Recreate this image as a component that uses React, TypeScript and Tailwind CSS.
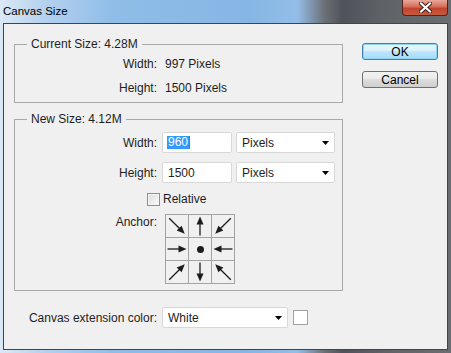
import React from "react";

const FRAME =
  "bg-[linear-gradient(90deg,#dbe9f7_0%,#b4d1ee_10%,#8fbde8_25%,#86b6e4_55%,#93bde7_66%,#6b7076_72%,#4f5359_76%,#5f6368_85%,#6a6e73_100%)]";

function Arrow({ rot, diag }: { rot: number; diag?: boolean }) {
  const start = diag ? 0 : 1.5;
  const tip = diag ? 22 : 20.5;
  return (
    <svg width="22" height="22" viewBox="0 0 22 22">
      <g transform={`rotate(${rot} 11 11)`}>
        <line x1={start} y1="11" x2={tip - 6} y2="11" stroke="#1c1c1c" strokeWidth="1.3" />
        <polygon points={`${tip - 8},7.5 ${tip},11 ${tip - 8},14.5`} fill="#1c1c1c" />
      </g>
    </svg>
  );
}

function Dropdown({ value, width }: { value: string; width: string }) {
  return (
    <div
      className={`${width} h-[21px] flex items-center justify-between bg-white border border-[#d8d8d8] rounded-[2px] pl-[5px] pr-[5px]`}
    >
      <span>{value}</span>
      <svg width="7" height="4" viewBox="0 0 7 4">
        <polygon points="0,0 7,0 3.5,4" fill="#000" />
      </svg>
    </div>
  );
}

export default function App() {
  const anchors: { rot: number; diag?: boolean; dot?: boolean }[] = [
    { rot: 45, diag: true },
    { rot: -90 },
    { rot: 135, diag: true },
    { rot: 0 },
    { rot: 0, dot: true },
    { rot: 180 },
    { rot: -45, diag: true },
    { rot: 90 },
    { rot: -135, diag: true },
  ];

  return (
    <div
      className={`w-[451px] h-[353px] overflow-hidden ${FRAME} font-['Liberation_Sans',Arial,sans-serif] text-[12px] leading-[14px] text-[#1e1e1e]`}
    >
      {/* title bar */}
      <div className="h-[23px] flex items-start justify-between">
        <span className="pl-[3px] pt-[4px] text-[11.5px] text-black">Canvas Size</span>
        <div className="mr-[3px] w-[46px] h-[16px] rounded-b-[4px] border border-t-0 border-[#5a1f16] bg-[linear-gradient(180deg,#e9a899_0%,#d46e5b_45%,#c1432c_55%,#c85b3c_100%)] flex items-center justify-center">
          <svg width="13" height="11" viewBox="0 0 13 11">
            <path d="M2 1.5 L11 9.5 M11 1.5 L2 9.5" stroke="#3a1a14" strokeWidth="4" strokeLinecap="square" />
            <path d="M2 1.5 L11 9.5 M11 1.5 L2 9.5" stroke="#fff" strokeWidth="2.2" strokeLinecap="square" />
          </svg>
        </div>
      </div>

      {/* client */}
      <div className="ml-[3px] w-[445px] h-[327px] border border-[#3b4650] bg-[#f0f0f0]">
        <div className="flex">
          <div className="pl-[10px] w-[339px]">
            <fieldset className="mt-[13px] border border-[#a9a9a9] pt-[6px] pb-[7px]">
              <legend className="ml-[12px] px-[4px]">Current Size: 4.28M</legend>
              <div className="flex flex-col gap-[10px]">
                <div className="flex">
                  <span className="w-[142px] text-right">Width:</span>
                  <span className="ml-[8px]">997 Pixels</span>
                </div>
                <div className="flex">
                  <span className="w-[142px] text-right">Height:</span>
                  <span className="ml-[8px]">1500 Pixels</span>
                </div>
              </div>
            </fieldset>

            <fieldset className="mt-[9px] border border-[#a9a9a9] pt-[6px] pb-[6px]">
              <legend className="ml-[12px] px-[4px]">New Size: 4.12M</legend>
              <div className="flex flex-col">
                <div className="flex items-center">
                  <span className="w-[142px] text-right">Width:</span>
                  <div className="ml-[5px] w-[70px] h-[21px] flex items-center bg-white border border-[#d8d8d8] rounded-[2px] pl-[4px]">
                    <span className="bg-[#3399ff] text-white leading-[13px] px-px">960</span>
                    <span className="w-px h-[13px] bg-[#c06010]" />
                  </div>
                  <div className="ml-[4px]">
                    <Dropdown value="Pixels" width="w-[99px]" />
                  </div>
                </div>
                <div className="flex items-center mt-[9px]">
                  <span className="w-[142px] text-right">Height:</span>
                  <div className="ml-[5px] w-[70px] h-[21px] flex items-center bg-white border border-[#d8d8d8] rounded-[2px] pl-[5px]">
                    1500
                  </div>
                  <div className="ml-[4px]">
                    <Dropdown value="Pixels" width="w-[99px]" />
                  </div>
                </div>
                <div className="flex items-center mt-[9px] pl-[132px]">
                  <span className="w-[13px] h-[13px] border border-[#8e8f8f] bg-[linear-gradient(135deg,#dcdcdc,#fbfbfb)] shadow-[inset_0_0_0_1px_#f4f4f4]" />
                  <span className="ml-[3px]">Relative</span>
                </div>
                <div className="flex mt-[8px]">
                  <span className="w-[142px] text-right pt-[1px]">Anchor:</span>
                  <div className="ml-[8px] grid grid-cols-3 gap-px p-px bg-[#a3a3a3] w-[70px]">
                    {anchors.map((a, i) => (
                      <div key={i} className="w-[22px] h-[22px] bg-[#f0f0f0] flex items-center justify-center">
                        {a.dot ? (
                          <span className="w-[7px] h-[7px] rounded-full bg-[#1c1c1c]" />
                        ) : (
                          <Arrow rot={a.rot} diag={a.diag} />
                        )}
                      </div>
                    ))}
                  </div>
                </div>
              </div>
            </fieldset>
          </div>

          <div className="ml-[19px] mt-[19px] flex flex-col gap-[11px]">
            <button className="w-[76px] h-[17px] rounded-[3px] border border-[#3c7fb1] bg-[linear-gradient(180deg,#eaf6fd_0%,#d9f0fc_45%,#bee6fd_50%,#a7d9f5_100%)] shadow-[inset_0_0_0_1px_#8fd6f5] leading-[14px] text-black">
              OK
            </button>
            <button className="w-[76px] h-[17px] rounded-[3px] border border-[#707070] bg-[linear-gradient(180deg,#f2f2f2_0%,#ebebeb_45%,#dddddd_50%,#cfcfcf_100%)] leading-[14px] text-black">
              Cancel
            </button>
          </div>
        </div>

        <div className="flex items-center mt-[16px]">
          <span className="w-[153px] text-right">Canvas extension color:</span>
          <div className="ml-[5px]">
            <Dropdown value="White" width="w-[126px]" />
          </div>
          <span className="ml-[5px] w-[15px] h-[15px] bg-white border border-[#a0a0a0]" />
        </div>
      </div>
    </div>
  );
}
